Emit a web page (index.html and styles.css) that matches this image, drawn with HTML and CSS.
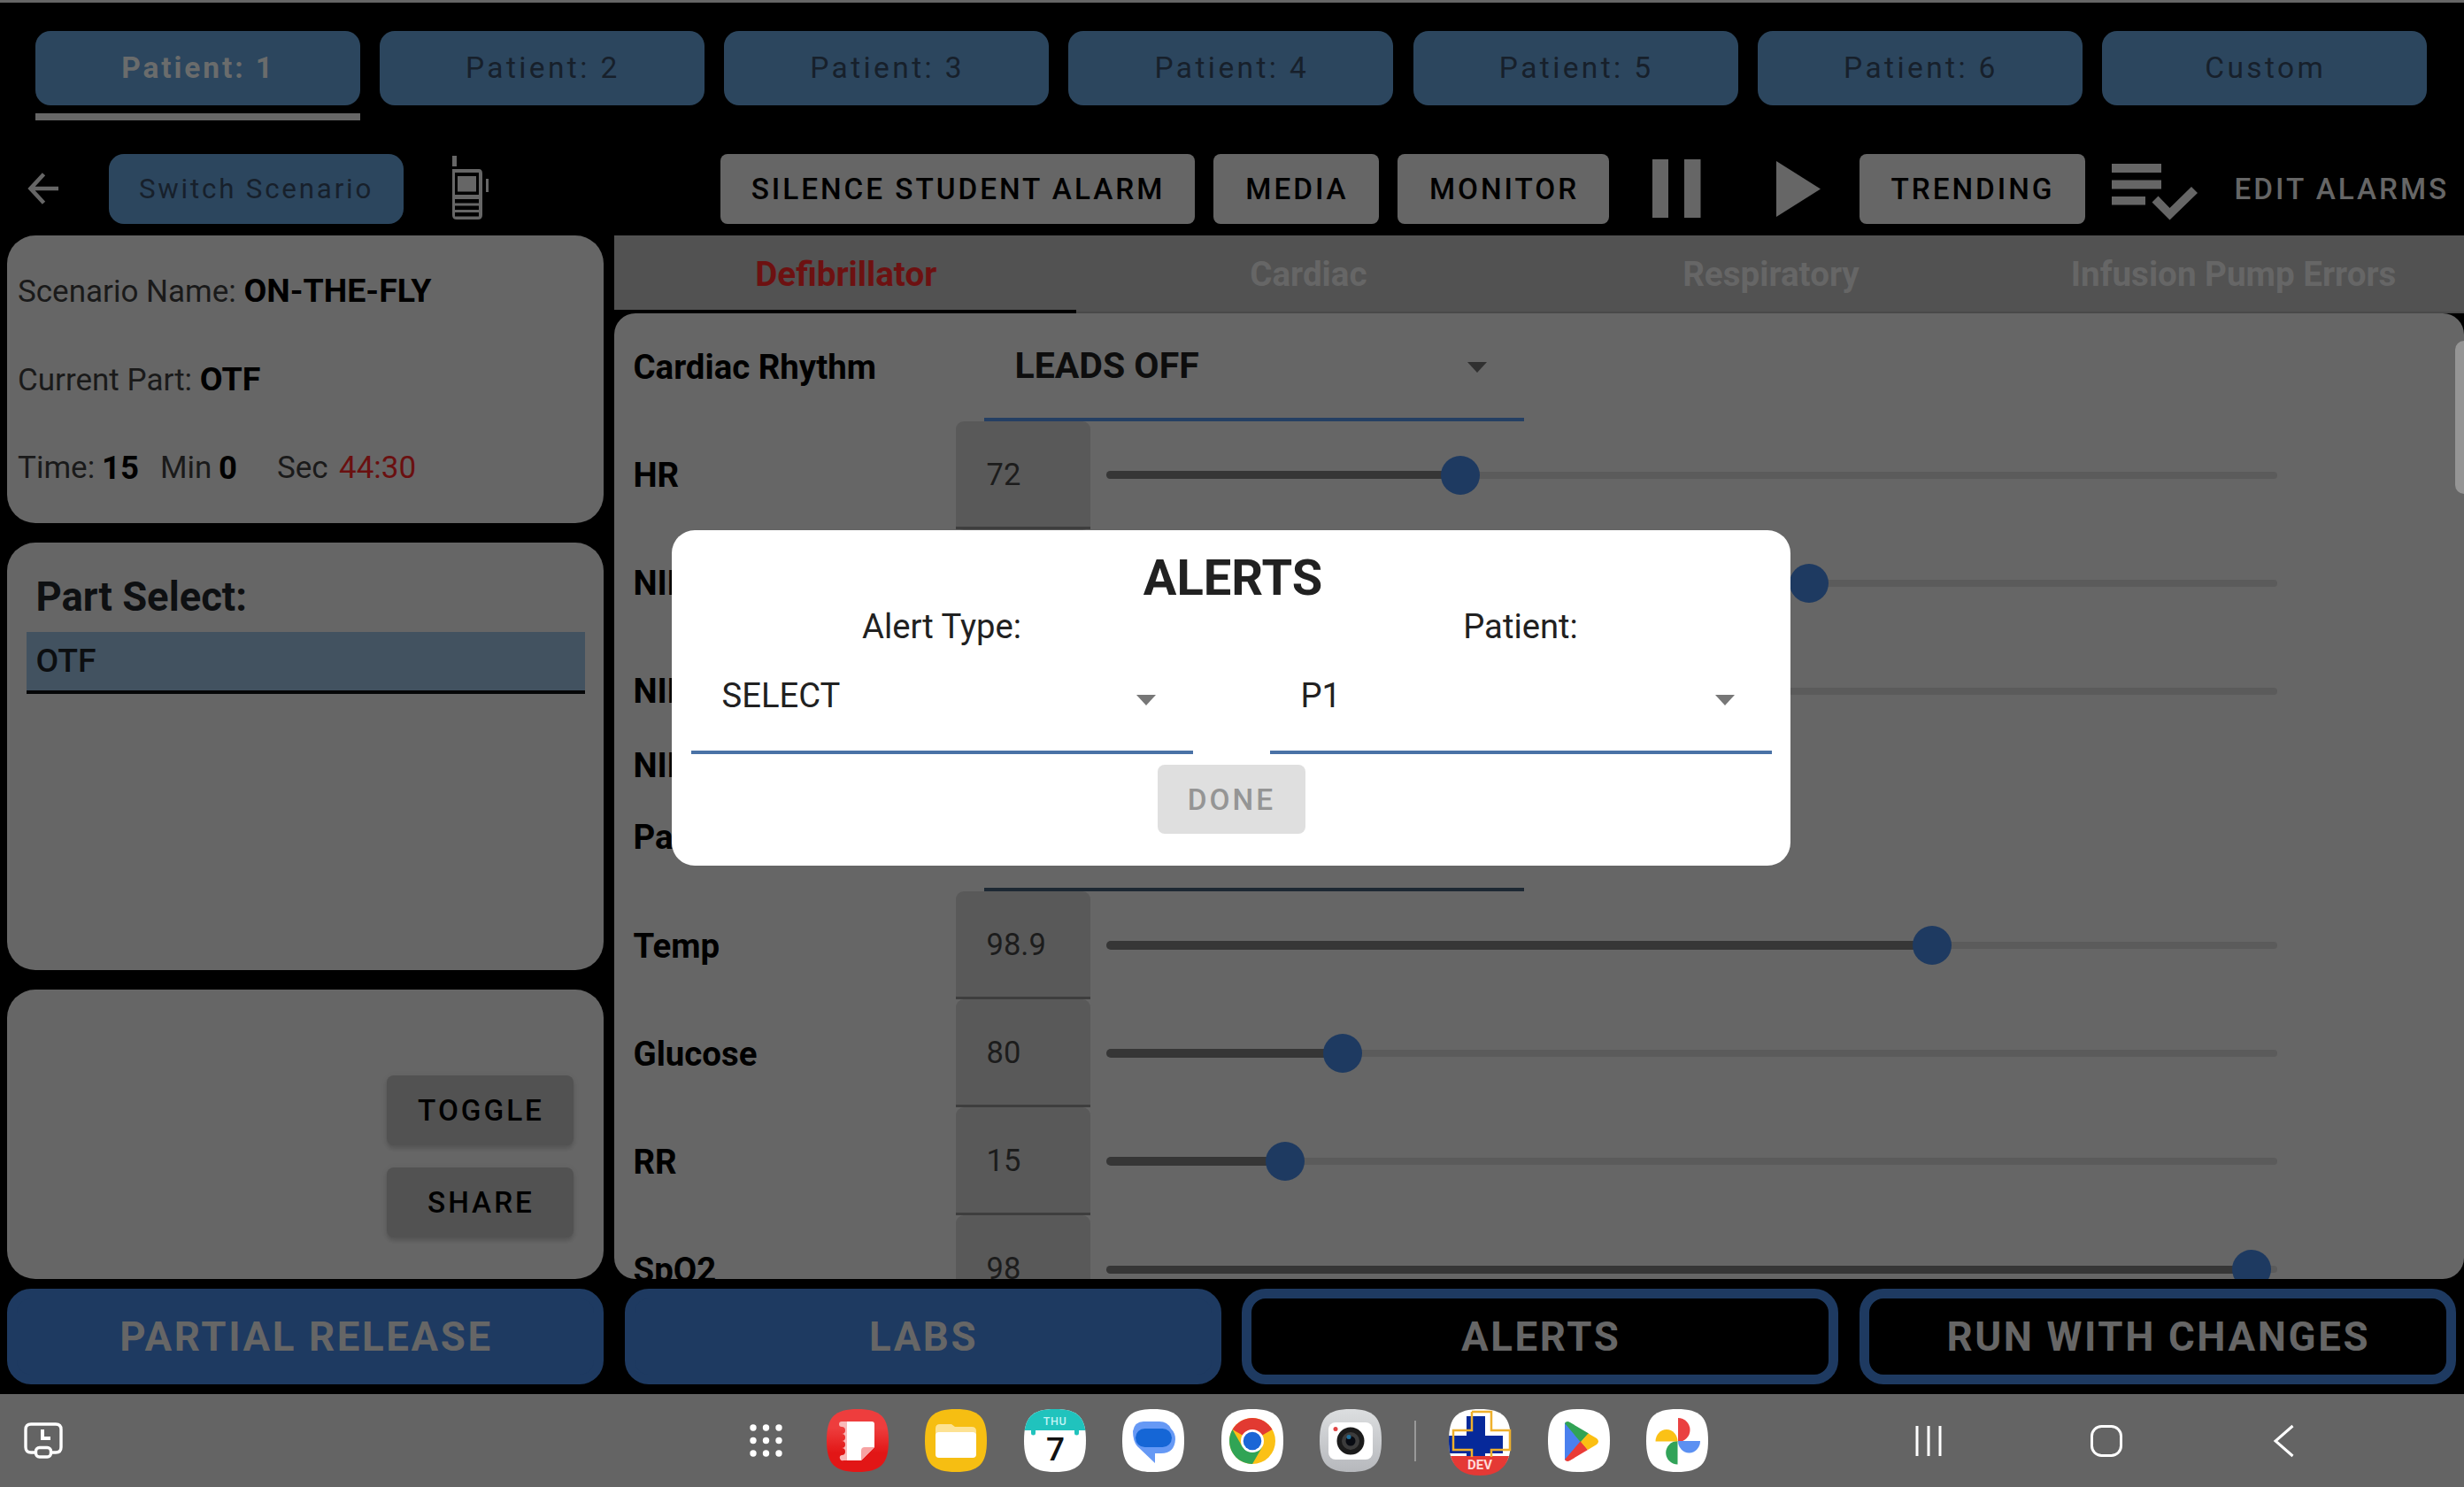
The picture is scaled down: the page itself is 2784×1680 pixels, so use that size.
FILE: index.html
```html
<!DOCTYPE html>
<html lang="en">
<head>
<meta charset="utf-8">
<title>Alerts</title>
<link rel="stylesheet" href="styles.css">
</head>
<body>
<div class="app">
  <nav class="patients">
    <button class="patient active">Patient: 1</button>
    <button class="patient">Patient: 2</button>
    <button class="patient">Patient: 3</button>
    <button class="patient">Patient: 4</button>
    <button class="patient">Patient: 5</button>
    <button class="patient">Patient: 6</button>
    <button class="patient">Custom</button>
  </nav>

  <header class="toolbar">
    <svg class="back" width="36" height="36" viewBox="0 0 36 36" fill="none" stroke="#666" stroke-width="4.6"><path d="M35 18H4M18.5 1.8L3.5 18l15 16.2"/></svg>
    <button class="switch">Switch Scenario</button>
    <svg class="radio" width="44" height="74" viewBox="0 0 44 74" fill="#666">
      <rect x="1" y="0" width="5" height="12"/>
      <path fill-rule="evenodd" d="M1 15H31Q35 15 35 20V67Q35 72 30 72H6Q1 72 1 67ZM4 19V44H31V19ZM4 49V53.5H31V49ZM4 56.5V61H31V56.5ZM4 64V68.5H31V64Z"/>
      <rect x="7" y="23" width="21" height="17.500"/>
      <rect x="39" y="26" width="3" height="15"/>
    </svg>
    <div class="actions">
      <button class="btn w-silence">SILENCE STUDENT ALARM</button>
      <button class="btn w-media">MEDIA</button>
      <button class="btn w-monitor">MONITOR</button>
      <svg class="pause" width="55" height="66" viewBox="0 0 55 66" fill="#666"><path d="M0 0h18v66H0zM36 0h18.5v66H36z"/></svg>
      <svg class="play" width="50" height="63" viewBox="0 0 50 63" fill="#666"><path d="M0 0l50 31.500-50 31.500z"/></svg>
      <button class="btn w-trending">TRENDING</button>
      <svg class="check" width="97" height="65" viewBox="0 0 97 65" fill="#666"><path d="M0 0h56v10H0zM0 18.500h56v10H0zM0 37h38v9.500H0zM45.500 43.500l7-7 13 13.500 24.500-24 7 7L65.500 63.500z"/></svg>
      <span class="edit">EDIT ALARMS</span>
    </div>
  </header>

  <main class="content">
    <aside class="side">
      <section class="card info">
        <p>Scenario Name: <b>ON-THE-FLY</b></p>
        <p>Current Part: <b>OTF</b></p>
        <p class="time"><span>Time:</span><b>15</b><span>Min</span><b>0</b><span>Sec</span><span class="red">44:30</span></p>
      </section>
      <section class="card parts">
        <h2>Part Select:</h2>
        <div class="part">OTF</div>
      </section>
      <section class="card tools">
        <button class="btn dark">TOGGLE</button>
        <button class="btn dark">SHARE</button>
      </section>
    </aside>

    <section class="monitor">
      <div class="tabs">
        <div class="tab selected">Defibrillator</div>
        <div class="tab">Cardiac</div>
        <div class="tab">Respiratory</div>
        <div class="tab">Infusion Pump Errors</div>
      </div>
      <div class="panel">
        <div class="row"><label>Cardiac Rhythm</label>
          <div class="select rhythm"><span>LEADS OFF</span><i class="caret"></i></div></div>
        <div class="row"><label>HR</label><div class="num">72</div>
          <div class="slider"><div class="fill" style="width:30.2%"></div><div class="thumb"></div></div></div>
        <div class="row"><label>NIBP</label><div class="num"></div>
          <div class="slider"><div class="fill" style="width:60%"></div><div class="thumb"></div></div></div>
        <div class="row"><label>NIBP</label><div class="num"></div>
          <div class="slider"><div class="fill" style="width:40%"></div><div class="thumb"></div></div></div>
        <div class="row short"><label>NIBP</label></div>
        <div class="row"><label>Pacer</label><div class="select rhythm dim"></div></div>
        <div class="row"><label>Temp</label><div class="num">98.9</div>
          <div class="slider"><div class="fill" style="width:70.55%"></div><div class="thumb"></div></div></div>
        <div class="row"><label>Glucose</label><div class="num">80</div>
          <div class="slider"><div class="fill" style="width:20.2%"></div><div class="thumb"></div></div></div>
        <div class="row"><label>RR</label><div class="num">15</div>
          <div class="slider"><div class="fill" style="width:15.25%"></div><div class="thumb"></div></div></div>
        <div class="row"><label>SpO2</label><div class="num">98</div>
          <div class="slider"><div class="fill" style="width:97.8%"></div><div class="thumb"></div></div></div>
      </div>
      <div class="scroll"></div>
    </section>
  </main>

  <footer class="release">
    <button class="big solid">PARTIAL RELEASE</button>
    <button class="big solid">LABS</button>
    <button class="big">ALERTS</button>
    <button class="big">RUN WITH CHANGES</button>
  </footer>

  <div class="taskbar">
    <svg class="clock" width="45" height="42" viewBox="0 0 45 42" fill="none" stroke="#fff" stroke-width="3.4"><path d="M14 34H8Q2 34 2 28V8Q2 2 8 2H36Q42 2 42 8V28Q42 34 36 34H31"/><rect x="13.500" y="28.500" width="17" height="10.500" rx="4"/><path d="M21 8V18H30" stroke-width="4"/></svg>
    <svg class="dots" width="37" height="37" viewBox="0 0 37 37" fill="#fff"><circle cx="4" cy="4" r="3.700"/><circle cx="18.500" cy="4" r="3.700"/><circle cx="33" cy="4" r="3.700"/><circle cx="4" cy="18.500" r="3.700"/><circle cx="18.500" cy="18.500" r="3.700"/><circle cx="33" cy="18.500" r="3.700"/><circle cx="4" cy="33" r="3.700"/><circle cx="18.500" cy="33" r="3.700"/><circle cx="33" cy="33" r="3.700"/></svg>
    <div class="dock">
      <svg class="ico" viewBox="0 0 70 71">
        <defs>
          <path id="squircle" d="M35 0C61 0 70 9 70 35.500S61 71 35 71 0 62 0 35.500 9 0 35 0Z"/>
          <clipPath id="sq"><use href="#squircle"/></clipPath>
          <linearGradient id="redg" x1="0" y1="0" x2="0" y2="1"><stop offset=".3" stop-color="#ee3d3d"/><stop offset=".7" stop-color="#e21616"/></linearGradient>
          <linearGradient id="camg" x1="0" y1="0" x2="0" y2="1"><stop offset="0" stop-color="#dcdee0"/><stop offset="1" stop-color="#b6b8bc"/></linearGradient>
        </defs>
        <use href="#squircle" fill="url(#redg)"/>
        <path d="M24 14H17a3 3 0 0 0 0 6 4 4 0 0 1 0 8 4 4 0 0 1 0 8 4 4 0 0 1 0 8 4 4 0 0 1 0 8 3 3 0 0 0 2 6h5z" fill="#f9b9b9"/>
        <path d="M23 14H51a3 3 0 0 1 3 3V43L39 58H23z" fill="#fff"/>
        <path d="M39 58V47Q39 43 43 43H54z" fill="#f7a3a3"/>
      </svg>
      <svg class="ico" viewBox="0 0 70 71"><use href="#squircle" fill="#f6be12"/><path d="M12 22Q12 17 17 17H30L34 20H53Q58 20 58 25V40H12z" fill="#fde293"/><rect x="12" y="26" width="46" height="29" rx="4" fill="#fff"/></svg>
      <svg class="ico" viewBox="0 0 70 71"><use href="#squircle" fill="#fff"/><path d="M0 0H70V24H62V27a2.500 2.500 0 0 1-5 0V24H13V27a2.500 2.500 0 0 1-5 0V24H0z" fill="#20c3bd" clip-path="url(#sq)"/><text x="35" y="17.500" font-size="12.500" font-weight="500" letter-spacing=".6" text-anchor="middle" fill="#c4f3f5">THU</text><text x="35.500" y="58" font-size="37" font-weight="500" text-anchor="middle" fill="#111">7</text></svg>
      <svg class="ico" viewBox="0 0 70 71"><use href="#squircle" fill="#fff"/><path d="M24 14H42Q51 14 55 22 60 27 60 34 59 50 44 50H37V61L17 42Q12 36 12 25 14 14 24 14Z" fill="#6699f5"/><rect x="15" y="22" width="41" height="21" rx="10.500" fill="#1566d6"/></svg>
      <svg class="ico" viewBox="0 0 70 71"><use href="#squircle" fill="#fff"/><circle cx="35" cy="36" r="26" fill="#fbc116"/><path d="M35 36L12.500 23A26 26 0 0 1 57.500 23Z" fill="#e23a32"/><path d="M12.500 23A26 26 0 0 0 35 62L46.300 42.500 35 36 23.700 42.500Z" fill="#30a455"/><circle cx="35" cy="36" r="13" fill="#fff"/><circle cx="35" cy="36" r="10.300" fill="#1a66d6"/></svg>
      <svg class="ico" viewBox="0 0 70 71"><use href="#squircle" fill="url(#camg)"/><rect x="10" y="15" width="50" height="42" rx="8" fill="#fff"/><circle cx="18" cy="22.500" r="2.500" fill="#e04545"/><circle cx="35" cy="36" r="15.500" fill="#1b1b1b"/><circle cx="35" cy="36" r="10" fill="#3c3c3c"/><circle cx="35" cy="36" r="5.500" fill="#080b12"/><circle cx="33" cy="31.500" r="2.500" fill="#1f6f9c"/></svg>
      <i class="sep"></i>
      <svg class="ico" viewBox="0 0 70 71"><use href="#squircle" fill="#fff"/><g clip-path="url(#sq)"><path d="M20 8H41V30H61V50H41V54H20V50H0V30H20Z" fill="#06299a"/></g><path d="M2 53H68Q62 75 35 75 8 75 2 53Z" fill="#e53935"/><path d="M26 3H48V24H69V46H48V54M26 3V24H5V46H26V54" fill="none" stroke="#eeb02c" stroke-width="2.500"/><text x="35" y="67.500" font-size="15" font-weight="700" text-anchor="middle" fill="#ffd9d9">DEV</text></svg>
      <svg class="ico" viewBox="0 0 70 71"><use href="#squircle" fill="#fff"/><path d="M19 15V58L38 36.500Z" fill="#4a80ee"/><path d="M19 16Q21 12.500 25 15L46 27.500 37 37.500Z" fill="#31a354"/><path d="M19 57Q21 60.500 25 58L45 46 37 36Z" fill="#ea3b36"/><path d="M45.500 27.500L55 33Q59 36.500 55 40L45 46 37 37Z" fill="#fbbf12"/></svg>
      <svg class="ico" viewBox="0 0 70 71"><use href="#squircle" fill="#fff"/><path d="M36 10A13.500 13.500 0 0 1 36 37Z" fill="#ea4141"/><path d="M61 36A12.500 13.500 0 0 1 36 36Z" fill="#5b90f2"/><path d="M35.500 62.500A13 13 0 0 1 35.500 36Z" fill="#31a359"/><path d="M10.500 36.500A12.500 13.500 0 0 1 35.500 36.500Z" fill="#fbc116"/></svg>
    </div>
    <svg class="recents" width="30" height="36" viewBox="0 0 30 36" stroke="#fff" stroke-width="3"><path d="M2 1V35M15 1V35M28 1V35"/></svg>
    <svg class="home" width="38" height="38" viewBox="0 0 38 38" fill="none" stroke="#fff" stroke-width="3"><rect x="2.500" y="2.500" width="33" height="33" rx="11"/></svg>
    <svg class="prev" width="25" height="38" viewBox="0 0 25 38" fill="none" stroke="#fff" stroke-width="3"><path d="M22.500 2L3 19 22.500 36"/></svg>
  </div>

  <div class="dialog" role="dialog">
    <h1>ALERTS</h1>
    <div class="fields">
      <div class="field"><label>Alert Type:</label><div class="select"><span>SELECT</span><i class="caret"></i></div></div>
      <div class="field"><label>Patient:</label><div class="select"><span>P1</span><i class="caret"></i></div></div>
    </div>
    <button class="done">DONE</button>
  </div>
</div>
</body>
</html>
```
FILE: styles.css
```css
* { box-sizing: border-box; margin: 0; padding: 0; }
body { width: 2784px; height: 1680px; overflow: hidden; background: #000; font-family: Roboto, "Liberation Sans", sans-serif; color: #000; }
button { border: 0; font-family: inherit; display: block; }
svg { display: block; flex: none; overflow: visible; }
.app { position: relative; display: flex; flex-direction: column; height: 1680px; border-top: 3px solid #666; }

/* patient tabs */
.patients { display: flex; gap: 22.3px; height: 133px; padding: 31.5px 39.5px 0; }
.patient { position: relative; width: 367px; height: 84px; padding-left: 2px; border-radius: 17px; background: #2c465e; color: #17202b; font-size: 33.5px; letter-spacing: 3.4px; }
.patient.active { color: #6a6c6c; font-weight: 700; letter-spacing: 2.9px; }
.patient.active::after { content: ""; position: absolute; left: 0; top: 93.5px; width: 367px; height: 8px; background: #666; }

/* toolbar */
.toolbar { display: flex; align-items: center; height: 130px; padding: 24px 15px 0 31px; }
.switch { width: 333px; height: 79px; margin-left: 56px; border-radius: 17px; background: #2c465e; color: #17202b; font-size: 31.3px; letter-spacing: .0893em; flex: none; }
.radio { margin-left: 54px; }
.actions { display: flex; align-items: center; margin-left: 259.500px; }
.btn { height: 79px; padding-left: 2px; border-radius: 8px; background: #666; color: #000; font-size: 33.3px; font-weight: 500; letter-spacing: .0893em; white-space: nowrap; flex: none; }
.w-silence { width: 536px; }
.w-media { width: 187px; margin-left: 21.500px; }
.w-monitor { width: 239px; margin-left: 21px; }
.pause { margin-left: 48.500px; }
.play { margin-left: 85px; }
.w-trending { width: 255px; margin-left: 44px; }
.check { margin: 8px 0 0 30px; }
.edit { margin-left: 42px; color: #666; font-size: 33.3px; font-weight: 500; letter-spacing: .0893em; white-space: nowrap; }

/* page body */
.content { display: flex; height: 1179px; gap: 11.500px; padding-left: 8px; }
.side { display: flex; flex-direction: column; gap: 22px; width: 674px; }
.card { background: #666; border-radius: 32px; }
.info { height: 325px; padding: 12px 0 0 12px; }
.info p { height: 100.400px; line-height: 100.400px; font-size: 35px; color: #1a1a1a; white-space: pre; }
.info b { font-size: 37.500px; color: #000; }
.info .time { display: grid; grid-template-columns: 95px 66px 66px 66px 70px auto; }
.info .time b { font-size: 36.500px; }
.info .red { color: #6a1010; }
.parts { height: 483px; padding: 37px 21.500px 0; }
.parts h2 { height: 64px; line-height: 50px; padding-left: 11px; font-size: 45.400px; color: #0e1012; }
.part { height: 70px; line-height: 65px; padding-left: 11px; border-bottom: 4px solid #050607; background: #425260; color: #0c0e10; font-size: 37.300px; font-weight: 500; }
.tools { height: 327px; padding: 97px 34px 0 0; display: flex; flex-direction: column; align-items: flex-end; gap: 25px; }
.dark { width: 211px; background: #525252; box-shadow: 0 4px 4px rgba(0,0,0,.12), 0 1px 7px rgba(0,0,0,.08); }

.monitor { position: relative; width: 2090.500px; background: #000; }
.tabs { display: flex; height: 87.500px; background: #525252; border-bottom: 2px solid #494949; }
.tab { width: 522.600px; height: 87.500px; line-height: 87px; padding-left: 2px; text-align: center; font-size: 38.600px; font-weight: 700; color: #666; }
.tab.selected { border-bottom: 4.500px solid #000; color: #6d1111; }
.panel { height: 1091.500px; overflow: hidden; border-radius: 24px; background: #666; padding-left: 22px; }
.row { display: grid; grid-template-columns: 364.500px 152px 18px 1323px; align-items: center; height: 122.100px; }
.row.short { height: 43px; }
.row label { font-size: 38.400px; font-weight: 700; color: #000; white-space: nowrap; }
.num { height: 122px; line-height: 120px; padding-left: 34.500px; border-radius: 9px 9px 0 0; border-bottom: 3px solid #3e3e3e; background: #595959; color: #1c1c1c; font-size: 34.500px; }
.slider { grid-column: 4; position: relative; height: 8px; border-radius: 5px; background: #5b5b5b; display: flex; align-items: center; }
.fill { height: 9.500px; border-radius: 5px; background: #363636; flex: none; }
.thumb { width: 44px; height: 44px; margin-left: -22px; border-radius: 50%; background: #1e3a61; flex: none; }
.select { display: flex; align-items: center; justify-content: space-between; padding: 0 42px 0 35px; border-bottom: 4px solid #4a72a6; }
.caret { width: 0; height: 0; border: 11px solid transparent; border-top: 12px solid #777; border-bottom: 0; }
.rhythm { width: 610px; height: 122px; margin-left: 31.500px; border-color: #243f63; font-size: 41px; font-weight: 700; color: #0d0d0d; }
.rhythm .caret { border-top-color: #303030; margin-top: 5px; }
.rhythm.dim { border-color: #1d2833; }
.scroll { position: absolute; right: 0; top: 119px; width: 10px; height: 173px; border-radius: 10px 0 0 10px; background: #959595; }

/* release buttons */
.release { display: flex; gap: 23.600px; height: 130px; padding: 11px 8px 0; }
.big { width: 674px; height: 108px; padding-left: 2px; border-radius: 27px; border: 11.500px solid #1e3a61; background: #000; color: #666; font-size: 45.600px; font-weight: 700; letter-spacing: 2.600px; white-space: nowrap; }
.big.solid { background: #1e3a61; }

/* system bar */
.taskbar { display: flex; align-items: center; height: 105px; background: #646464; padding-left: 27px; }
.dots { margin-left: 775px; }
.dock { display: flex; align-items: center; gap: 41.600px; margin-left: 49.500px; }
.ico { width: 70px; height: 71px; }
.sep { width: 2px; height: 46px; margin: 0 -4.800px; background: #999; }
.recents { margin-left: 233.500px; }
.home { margin-left: 167px; }
.prev { margin-left: 169px; }

/* alerts dialog */
.dialog { position: absolute; left: 759px; top: 596px; width: 1264px; height: 379px; border-radius: 26px; background: #fff; color: #212121; display: flex; flex-direction: column; align-items: center; padding-top: 16px; }
.dialog h1 { height: 76px; line-height: 76px; font-size: 56px; font-weight: 700; padding-left: 4px; }
.fields { display: flex; gap: 87px; }
.field { width: 567px; font-size: 38.200px; }
.field label { display: block; height: 32px; line-height: 34px; text-align: center; }
.field .select { height: 129px; }
.field .caret { margin-top: 10px; }
.done { width: 167px; height: 78px; margin-top: 12px; padding-left: 1px; border-radius: 8px; background: #dfdfdf; color: #959595; font-size: 33.400px; font-weight: 500; letter-spacing: .0893em; }
```
